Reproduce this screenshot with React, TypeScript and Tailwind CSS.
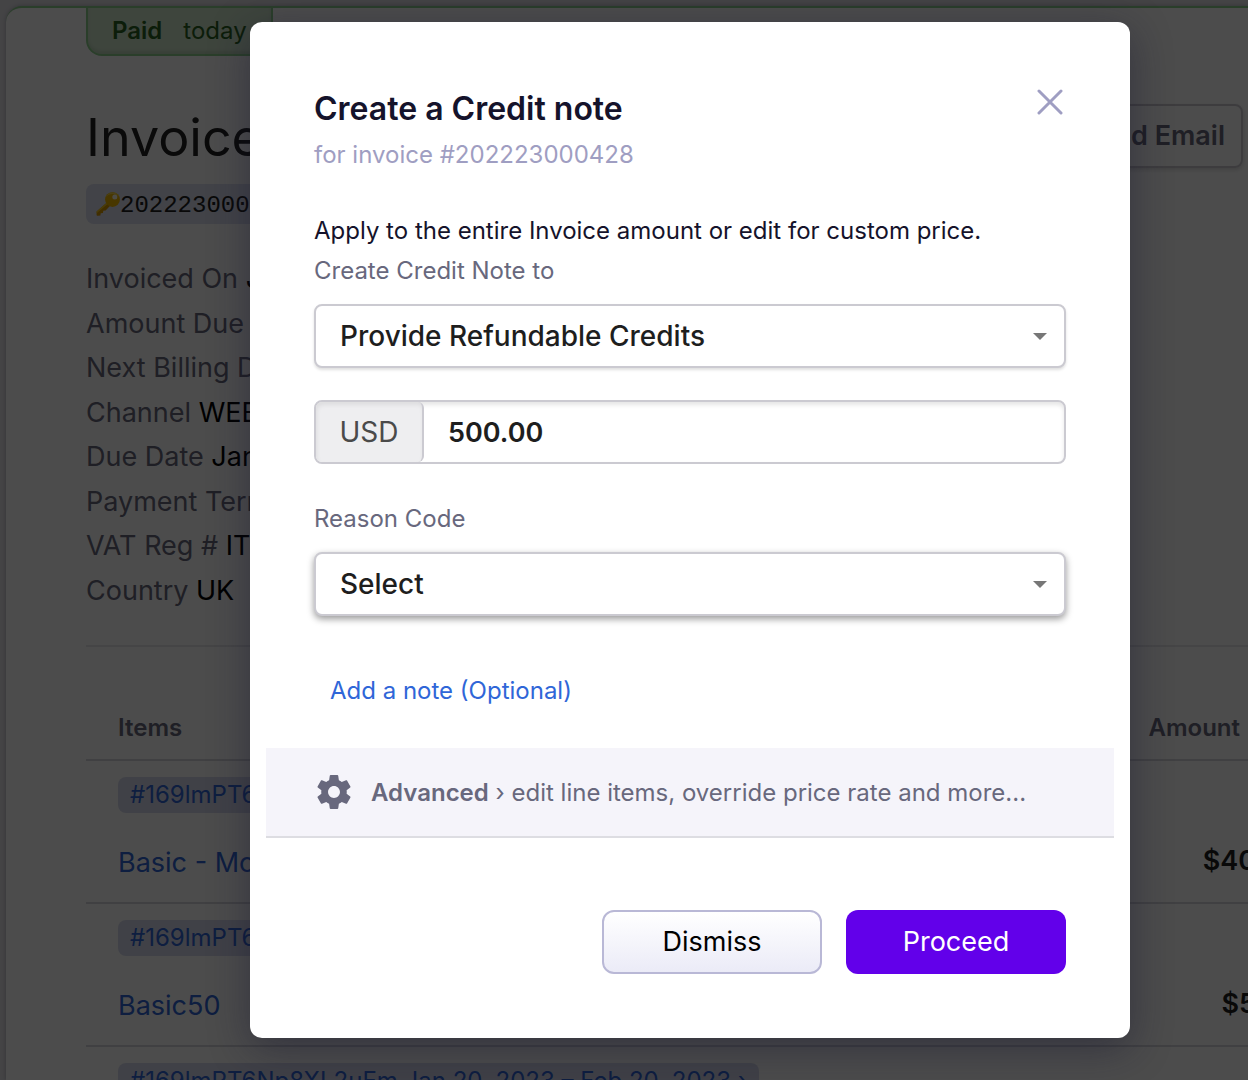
import React from "react";

const details = [
  { label: "Invoiced On", value: "Jan" },
  { label: "Amount Due", value: "" },
  { label: "Next Billing Date", value: "" },
  { label: "Channel", value: "WEB" },
  { label: "Due Date", value: "Jan" },
  { label: "Payment Terms", value: "" },
  { label: "VAT Reg #", value: "IT" },
  { label: "Country", value: "UK" },
];

const items = [
  { period: "#169lmPT6Np8XL2uEm", name: "Basic - Monthly", amount: "$40" },
  { period: "#169lmPT6Np8XL2uEm", name: "Basic50", amount: "$5" },
  { period: "#169lmPT6Np8XL2uEm Jan 20, 2023 – Feb 20, 2023 ›", name: "", amount: "" },
];

function KeyIcon() {
  return (
    <svg viewBox="0 0 24 24" className="size-6 shrink-0" aria-hidden="true">
      <path d="M13.2 8.6 0.600 19.600v3.200c0 .7.5 1 1.200 1l2.600-.3.300-2.300 2.200-.2.400-2.300 2.300-.2 6-6.200z" fill="#d99a00" />
      <path d="M13.200 8.600 0.600 19.600v1.700L14.200 9.900z" fill="#f6c924" />
      <circle cx="16.500" cy="7.600" r="7.400" fill="#f0b800" />
      <path d="M9.800 5.200a7.300 7.300 0 0 1 13.700 0A9 9 0 0 0 9.800 5.200z" fill="#fbd94a" />
      <circle cx="18.800" cy="5" r="2.500" fill="#fffbe8" />
    </svg>
  );
}

function GearIcon() {
  return (
    <svg viewBox="2 2 20 20" className="h-[34px] w-[34px] shrink-0 fill-[#68687d]" aria-hidden="true">
      <path d="M19.430 12.980c.04-.32.07-.64.07-.98s-.03-.66-.07-.98l2.110-1.650c.19-.15.24-.42.12-.64l-2-3.460c-.12-.22-.39-.3-.61-.22l-2.490 1c-.52-.4-1.080-.73-1.690-.98l-.38-2.650C14.460 2.180 14.250 2 14 2h-4c-.25 0-.46.18-.49.42l-.38 2.650c-.61.25-1.170.59-1.690.98l-2.490-1c-.23-.09-.49 0-.61.22l-2 3.460c-.13.22-.07.49.12.64l2.110 1.650c-.04.32-.07.65-.07.98s.03.66.07.98l-2.110 1.650c-.19.15-.24.42-.12.64l2 3.460c.12.22.39.3.61.22l2.490-1c.52.4 1.080.73 1.690.98l.38 2.650c.03.24.24.42.49.42h4c.25 0 .46-.18.49-.42l.38-2.650c.61-.25 1.170-.59 1.690-.98l2.490 1c.23.09.49 0 .61-.22l2-3.460c.12-.22.07-.49-.12-.64l-2.110-1.650zM12 15.500c-1.930 0-3.500-1.570-3.500-3.500s1.570-3.500 3.500-3.500 3.500 1.570 3.500 3.500-1.570 3.500-3.500 3.500z" />
    </svg>
  );
}

function SelectField({ id, option, className }: { id: string; option: string; className: string }) {
  return (
    <div className="relative mt-[13px]">
      <select
        id={id}
        className={
          "block h-16 w-full appearance-none rounded-lg border-2 border-[#cbcad1] bg-white px-6 text-[28px] font-medium text-[#1e1e1e] outline-none " +
          className
        }
      >
        <option>{option}</option>
      </select>
      <svg
        viewBox="0 0 14 7"
        className="pointer-events-none absolute top-[29px] right-[19px] h-[7px] w-[14px] fill-[#777777]"
        aria-hidden="true"
      >
        <path d="M0 0h14L7 7z" />
      </svg>
    </div>
  );
}

function InvoicePage() {
  return (
    <main className="h-full overflow-hidden bg-[#e4e3e8] pt-1.5 pl-1.5">
      <div className="h-full rounded-tl-2xl border-t-2 border-[#8ed08e] bg-white pl-20 shadow-[0_0_4px_rgba(60,60,90,0.35)]">
        <div className="flex h-12 w-[187px] items-center gap-[21px] rounded-b-2xl border-2 border-t-0 border-[#8ed08e] bg-[#d0e6cd] pl-6 text-2xl text-[#2a6322] shadow-[inset_0_-3px_3px_rgba(40,90,40,0.12)]">
          <b className="font-semibold">Paid</b>
          <span>today</span>
        </div>

        <header className="mt-12 flex items-start justify-between pr-[5px]">
          <div>
            <h1 className="text-[52px] leading-[68px] text-[#222222]">Invoice</h1>
            <div className="mt-3 flex h-10 w-80 items-center rounded-lg bg-[#dcdff0] pl-2.5 font-['Liberation_Mono',monospace] text-2xl text-[#1e1e1e]">
              <KeyIcon />
              <span className="pt-1">202223000428</span>
            </div>
          </div>
          <button className="h-16 rounded-lg border-2 border-[#cbcad1] px-4 text-[27px] font-semibold text-[#68687d] shadow-[0_2px_4px_rgba(0,0,0,0.15)]">
            Send Email
          </button>
        </header>

        <ul className="mt-[33px] text-[27px] leading-[1.65] text-[#68687d]">
          {details.map((d) => (
            <li key={d.label}>
              {d.label} <span className="text-black">{d.value}</span>
            </li>
          ))}
        </ul>

        <hr className="mt-8 border-t-2 border-[#e6e6ea]" />

        <table className="mt-[45px] w-[calc(100%+8px)] border-collapse text-left">
          <thead>
            <tr className="h-[68px] border-b-2 border-[#d6d6dc] text-2xl text-[#68687d]">
              <th className="pt-1 pl-8 font-semibold">Items</th>
              <th className="pt-1 pr-4 text-right font-semibold">Amount</th>
            </tr>
          </thead>
          <tbody>
            {items.map((item, i) => (
              <tr key={i} className="h-[143px] border-b-2 border-[#d6d6dc] align-top">
                <td className="pt-4 pl-8 whitespace-nowrap text-[#2f66d8]">
                  <a href="#" className="inline-flex h-9 items-center rounded-lg bg-[#d7daee] px-3 text-2xl">
                    {item.period}
                  </a>
                  <a href="#" className="mt-[30px] block text-[27px] leading-10">
                    {item.name}
                  </a>
                </td>
                <td className="pt-20 text-right text-[27px] leading-10 font-semibold text-[#1e1e1e]">{item.amount}</td>
              </tr>
            ))}
          </tbody>
        </table>
      </div>
    </main>
  );
}

function CreditNoteDialog() {
  return (
    <form
      role="dialog"
      aria-labelledby="dialog-title"
      onSubmit={(e) => e.preventDefault()}
      className="w-full max-w-[880px] rounded-xl bg-white pt-16 pb-16 shadow-[0_10px_40px_rgba(20,20,45,0.45)]"
    >
      <div className="px-16">
        <div className="flex items-start justify-between">
          <div>
            <h2 id="dialog-title" className="text-[32px] leading-[46px] font-semibold text-[#15132b]">
              Create a Credit note
            </h2>
            <p className="text-2xl leading-[46px] text-[#9f9ec2]">for invoice #202223000428</p>
          </div>
          <button type="button" aria-label="Close" className="flex size-8 items-center justify-center">
            <svg viewBox="0 0 26 26" className="size-[26px] stroke-[#9f9ec2]" fill="none" strokeWidth="3" strokeLinecap="round">
              <path d="M2 2l22 22M24 2L2 24" />
            </svg>
          </button>
        </div>

        <p className="mt-[33px] text-2xl leading-10 text-[#15132b]">
          Apply to the entire Invoice amount or edit for custom price.
        </p>
        <label htmlFor="credit-type" className="block text-2xl leading-10 text-[#68687d]">
          Create Credit Note to
        </label>
        <SelectField
          id="credit-type"
          option="Provide Refundable Credits"
          className="shadow-[0_2px_3px_rgba(0,0,0,0.13)]"
        />

        <div className="mt-8 flex h-16 rounded-lg border-2 border-[#cbcad1] bg-white shadow-[inset_0_3px_4px_rgba(0,0,0,0.1)]">
          <label
            htmlFor="amount"
            className="flex w-[108px] items-center justify-center rounded-md border-r-2 border-[#cbcad1] bg-[#eeeef0] text-[28px] text-[#4a4a4a] shadow-[inset_1px_3px_4px_rgba(0,0,0,0.07)]"
          >
            USD
          </label>
          <input
            id="amount"
            defaultValue="500.00"
            className="min-w-0 flex-1 bg-transparent px-6 pt-0.5 text-[27px] font-semibold text-[#1e1e1e] outline-none"
          />
        </div>

        <label htmlFor="reason" className="mt-[35px] block text-2xl leading-10 text-[#68687d]">
          Reason Code
        </label>
        <SelectField id="reason" option="Select" className="shadow-[0_3px_7px_rgba(0,0,0,0.4)]" />

        <a href="#" className="mt-[55px] ml-4 block text-2xl leading-10 text-[#2f66d8]">
          Add a note (Optional)
        </a>
      </div>

      <button
        type="button"
        className="mx-4 mt-[37px] flex h-[90px] w-[calc(100%-32px)] items-center gap-5 border-b-2 border-[#dddde2] bg-[#f5f4fa] pl-[51px] text-left text-2xl text-[#68687d]"
      >
        <GearIcon />
        <span className="pt-0.5">
          <b className="font-semibold">Advanced</b> › edit line items, override price rate and more...
        </span>
      </button>

      <div className="mt-[72px] flex justify-end gap-6 px-16 text-[27px]">
        <button
          type="button"
          className="h-16 w-[220px] rounded-xl border-2 border-[#b9b8d6] bg-linear-to-b from-white to-[#ebebf7] text-black"
        >
          Dismiss
        </button>
        <button type="submit" className="h-16 w-[220px] rounded-xl bg-[#6200ea] text-white">
          Proceed
        </button>
      </div>
    </form>
  );
}

export default function App() {
  return (
    <div className="relative h-screen overflow-hidden font-['Inter',sans-serif]">
      <InvoicePage />
      <div className="absolute inset-0 flex items-start justify-center overflow-hidden bg-black/70 pt-[22px] pl-[132px]">
        <CreditNoteDialog />
      </div>
    </div>
  );
}
